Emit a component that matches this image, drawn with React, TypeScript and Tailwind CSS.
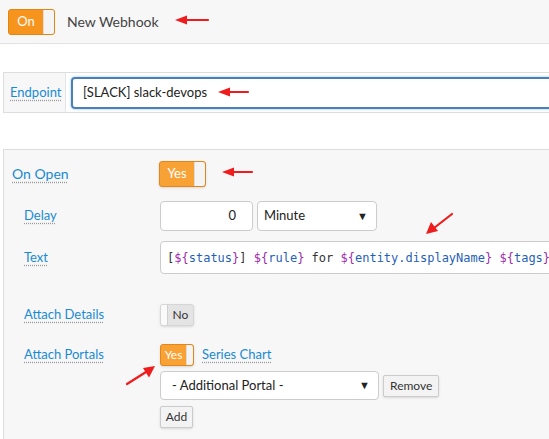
import React from "react";

const font = { fontFamily: 'Lato, "Open Sans", Arial, sans-serif' };

function Toggle({ label, on, size = "lg" }: { label: string; on: boolean; size?: "lg" | "sm" }) {
  const dims = size === "lg" ? "w-[47px] h-[26px] text-[13px]" : "w-[34px] h-[22px] text-[12px]";
  const knob = size === "lg" ? "w-[11px]" : "w-[7px]";
  if (on) {
    return (
      <div className={`${dims} flex rounded-[3px] border border-[#e5861a] bg-[#f8a235] overflow-hidden shadow-sm`}>
        <div className="flex-1 flex items-center justify-center text-white">{label}</div>
        <div className={`${knob} bg-[#f4f4f4] border-l border-[#ddd] rounded-r-[2px]`} />
      </div>
    );
  }
  return (
    <div className={`${dims} flex rounded-[3px] border border-[#d6d6d6] bg-[#e4e4e4] overflow-hidden shadow-sm`}>
      <div className={`${knob} bg-[#fafafa] border-r border-[#d0d0d0]`} />
      <div className="flex-1 flex items-center justify-center text-[#333]">{label}</div>
    </div>
  );
}

function Label({ children, className = "" }: { children: React.ReactNode; className?: string }) {
  return (
    <span
      className={`text-[#1a8ad4] underline decoration-dotted decoration-[#999] underline-offset-[3px] ${className}`}
    >
      {children}
    </span>
  );
}

function Caret() {
  return <span className="text-[11px] text-[#222]">▼</span>;
}

export default function App() {
  const p = "text-[#9b2ca8]";
  const v = "text-[#1f5fb8]";
  return (
    <div className="relative w-[549px] h-[439px] overflow-hidden bg-white text-[13px] text-[#333]" style={font}>
      {/* header */}
      <div className="h-[44px] bg-[#f7f7f7] border-b border-[#e2e2e2] flex items-center pl-2">
        <div className="w-[47px] h-[26px] flex rounded-[3px] border border-[#e08612] bg-[#f7941d] overflow-hidden">
          <div className="flex-1 flex items-center justify-center text-white text-[13px]">On</div>
          <div className="w-[11px] bg-[#f4f4f4] border-l border-[#ddd]" />
        </div>
        <span className="ml-3 text-[14px] text-[#444]">New Webhook</span>
      </div>

      {/* endpoint */}
      <div className="mt-[28px] ml-[3px] h-[41px] flex border-t border-b border-l border-[#ddd] bg-white">
        <div className="w-[62px] shrink-0 border-r border-[#e4e4e4] bg-[#f7f7f7] flex items-center pl-[6px]">
          <Label className="text-[13px]">Endpoint</Label>
        </div>
        <div className="flex-1 flex items-center pl-[5px]">
          <div className="w-[500px] shrink-0 h-[32px] rounded-[4px] border-2 border-[#4a80b5] shadow-[0_0_3px_#9cc3ea] flex items-center pl-[10px] text-[13px] text-[#222]">
            [SLACK] slack-devops
          </div>
        </div>
      </div>

      {/* panel */}
      <div className="mt-[36px] ml-[3px] w-[560px] h-[300px] border border-[#ddd] bg-[#f7f7f7]">
        <div className="flex items-center h-[25px] mt-[11px]">
          <div className="w-[155px] pl-2">
            <Label className="text-[14px]">On Open</Label>
          </div>
          <Toggle label="Yes" on />
        </div>

        <div className="flex items-center h-[30px] mt-[15px]">
          <div className="w-[156px] pl-5">
            <Label>Delay</Label>
          </div>
          <div className="w-[93px] h-[30px] bg-white border border-[#ccc] rounded-[4px] flex items-center justify-end pr-[16px] text-[13px] text-[#222]">
            0
          </div>
          <div className="ml-[4px] w-[120px] h-[30px] bg-white border border-[#ccc] rounded-[4px] flex items-center justify-between pl-[6px] pr-[8px] text-[13px] text-[#222]">
            Minute
            <Caret />
          </div>
        </div>

        <div className="flex items-center h-[33px] mt-[10px]">
          <div className="w-[156px] pl-5">
            <Label>Text</Label>
          </div>
          <div
            className="flex-1 h-[33px] bg-white border border-[#ccc] rounded-l-[4px] flex items-center pl-[6px] text-[12px] text-[#333] whitespace-pre overflow-hidden"
            style={{ fontFamily: '"DejaVu Sans Mono", monospace' }}
          >
            <span>[</span>
            <span className={p}>$</span>
            <span className={p}>{"{"}</span>
            <span className={v}>status</span>
            <span className={p}>{"}"}</span>
            <span>{"] "}</span>
            <span className={p}>$</span>
            <span className={p}>{"{"}</span>
            <span className={v}>rule</span>
            <span className={p}>{"}"}</span>
            <span>{" for "}</span>
            <span className={p}>$</span>
            <span className={p}>{"{"}</span>
            <span className={v}>entity.displayName</span>
            <span className={p}>{"}"}</span>
            <span>{" "}</span>
            <span className={p}>$</span>
            <span className={p}>{"{"}</span>
            <span className={v}>tags</span>
            <span className={p}>{"}"}</span>
          </div>
        </div>

        <div className="flex items-center h-[22px] mt-[30px]">
          <div className="w-[156px] pl-5">
            <Label>Attach Details</Label>
          </div>
          <Toggle label="No" on={false} size="sm" />
        </div>

        <div className="flex items-center h-[22px] mt-[18px]">
          <div className="w-[156px] pl-5">
            <Label>Attach Portals</Label>
          </div>
          <Toggle label="Yes" on size="sm" />
          <Label className="ml-[8px]">Series Chart</Label>
        </div>

        <div className="flex items-center mt-[5px] ml-[156px]">
          <div className="w-[219px] h-[29px] bg-white border border-[#ccc] rounded-[4px] flex items-center justify-between pl-[11px] pr-[8px] text-[13px] text-[#222]">
            - Additional Portal -
            <Caret />
          </div>
          <div className="ml-[4px] h-[22px] px-[6px] border border-[#ccc] bg-[#f3f3f3] rounded-[2px] flex items-center text-[12px] text-[#333] shadow-sm">
            Remove
          </div>
        </div>

        <div className="mt-[6px] ml-[156px] w-[33px] h-[22px] border border-[#ccc] bg-[#f3f3f3] rounded-[2px] flex items-center justify-center text-[12px] text-[#333] shadow-sm">
          Add
        </div>
      </div>

      {/* red arrows */}
      <svg className="absolute inset-0 pointer-events-none" width="549" height="439">
        <g stroke="#ee1c1c" strokeWidth="2.2" fill="#ee1c1c" strokeLinecap="round">
          <line x1="208" y1="20" x2="184" y2="20" />
          <polygon points="175,20 187,15.5 187,24.5" stroke="none" />
          <line x1="248" y1="92" x2="227" y2="92" />
          <polygon points="218,92 230,87.5 230,96.5" stroke="none" />
          <line x1="252" y1="172" x2="231" y2="172" />
          <polygon points="222,172 234,167.5 234,176.5" stroke="none" />
          <line x1="452" y1="214" x2="434" y2="228" />
          <polygon points="426,234 431,222 438,231" stroke="none" />
          <line x1="127" y1="384" x2="146" y2="372" />
          <polygon points="155,366 149,377.5 143,368" stroke="none" />
        </g>
      </svg>
    </div>
  );
}
